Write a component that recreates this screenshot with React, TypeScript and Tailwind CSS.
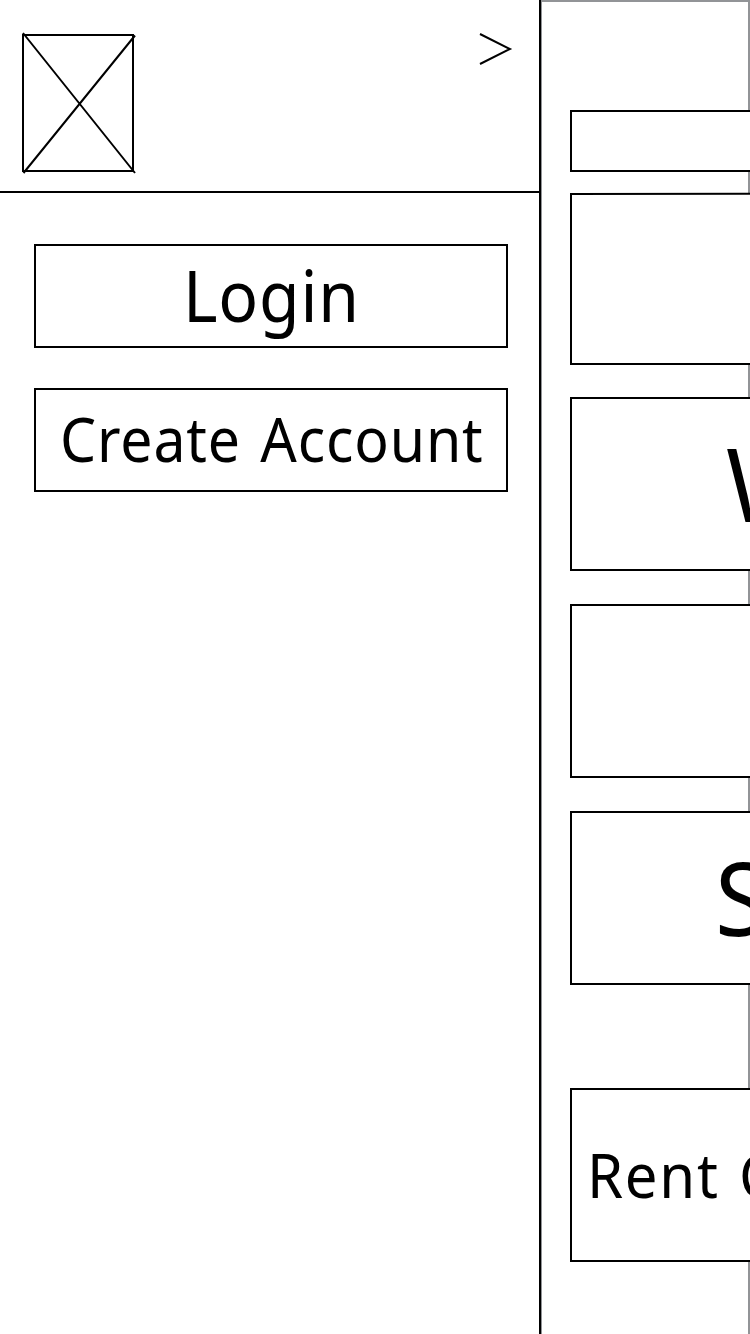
import type { ReactNode } from 'react';

function Label({ className, children }: { className: string; children: ReactNode }) {
  return <span className={`block origin-left whitespace-pre leading-none ${className}`}>{children}</span>;
}

function SidePanel() {
  return (
    <aside className="h-full w-[541px] shrink-0 border-r-2 border-black">
      <header className="flex h-[193px] items-start justify-between border-b-2 border-black pl-[20px] pr-[24px] pt-[32px]">
        <svg width="117" height="143" viewBox="0 0 117 143" fill="none" stroke="black" strokeWidth="2">
          <rect x="3" y="3" width="110" height="136" />
          <path d="M3 1L115 141M3.5 141L115 3.5" />
        </svg>
        <svg width="36" height="34" viewBox="0 0 36 34" fill="none" stroke="black" strokeWidth="2">
          <path d="M1 2L31 17L1 32" />
        </svg>
      </header>
      <nav className="flex flex-col gap-10 pl-[34px] pt-[51px]">
        <button className="flex h-[104px] w-[474px] items-center border-2 border-black pb-[3px] pl-[147px]">
          <Label className="scale-x-[0.93] text-[71px] tracking-[0.8px]">Login</Label>
        </button>
        <button className="flex h-[104px] w-[474px] items-center border-2 border-black pb-[2px] pl-[24px]">
          <Label className="scale-x-[0.93] text-[61.5px] tracking-[0.9px] [word-spacing:4px]">Create Account</Label>
        </button>
      </nav>
    </aside>
  );
}

function Home() {
  return (
    <main className="h-full w-[209px] shrink-0 border-2 border-b-0 border-l border-[#929497] pl-[28px] pt-[108px]">
      <div className="flex w-[400px] flex-col">
        <div className="h-[62px] border-2 border-black bg-white" />
        <div className="mt-[21px] h-[172px] border-2 border-t-0 border-black bg-white">
          <svg className="-ml-0.5 block overflow-visible" width="400" height="3" viewBox="0 0 400 3">
            <path d="M0 1L400 0.3" stroke="black" strokeWidth="2" />
          </svg>
        </div>
        <div className="mt-8 flex h-[174px] items-center border-2 border-black bg-white pb-[2px] pl-[154px]">
          <Label className="scale-x-[0.95] text-[102px]">W</Label>
        </div>
        <div className="mt-[33px] h-[174px] border-2 border-black bg-white" />
        <div className="mt-[33px] flex h-[174px] items-center border-2 border-black bg-white pb-[2px] pl-[143px]">
          <Label className="scale-x-[0.95] text-[102px]">S</Label>
        </div>
        <div className="mt-[103px] flex h-[174px] items-center border-2 border-black bg-white pb-[1px] pl-[14.5px]">
          <Label className="scale-x-[0.93] text-[62.5px] tracking-[1.8px] [word-spacing:3px]">Rent C</Label>
        </div>
      </div>
    </main>
  );
}

export default function App() {
  return (
    <div className="flex h-[1334px] w-[750px] overflow-hidden bg-white font-['Noto_Sans',sans-serif] text-black">
      <SidePanel />
      <Home />
    </div>
  );
}
